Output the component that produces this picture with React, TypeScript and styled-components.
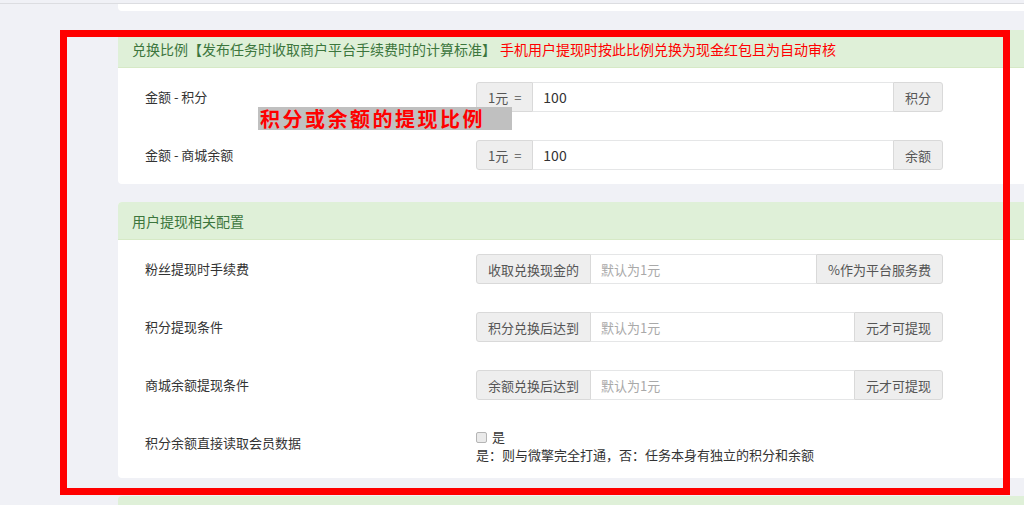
import React from 'react';
import styled, { createGlobalStyle } from 'styled-components';

const GlobalStyle = createGlobalStyle`
  html, body {
    margin: 0;
    padding: 0;
    background: #f0f1f6;
    overflow: hidden;
  }
  body {
    font-family: "Noto Sans CJK SC", "Liberation Sans", sans-serif;
    color: #333;
  }
`;

const Page = styled.div`
  position: relative;
  height: 505px;
  overflow: hidden;
`;

const TopLine = styled.div`
  height: 3px;
  border-bottom: 1px solid #dcdde1;
`;

const Column = styled.div`
  padding-left: 118px;
`;

const PrevPanelEnd = styled.div`
  width: 940px;
  height: 7px;
  background: #fff;
  border-radius: 0 0 4px 4px;
  margin-bottom: 19px;
`;

const Panel = styled.section`
  width: 940px;
  background: #fff;
  border-radius: 4px;
  overflow: hidden;
  margin-bottom: 18px;
`;

const PanelHeading = styled.header`
  height: 37px;
  display: flex;
  align-items: center;
  padding: 0 14px;
  background: #dff0d8;
  border-bottom: 1px solid #d6e9c6;
  color: #3c763d;
  font-size: 14px;
  white-space: nowrap;
`;

const Warn = styled.span`
  color: #f00;
  margin-left: 4px;
`;

const PanelBody = styled.div`
  padding: 14px 0 14px 27px;
`;

const FormRow = styled.div`
  display: flex;
  align-items: flex-start;
  & + & {
    margin-top: 28px;
  }
`;

const RowLabel = styled.label`
  width: 331px;
  padding-top: 7px;
  line-height: 16px;
  font-size: 13px;
  color: #333;
`;

const InputGroup = styled.div`
  display: flex;
  width: 467px;
  height: 30px;
`;

const Addon = styled.span<{ $side: 'left' | 'right' }>`
  display: flex;
  align-items: center;
  padding: 0 11px;
  background: #eee;
  border: 1px solid #d9d9d9;
  color: #555;
  font-size: 13px;
  word-spacing: 3px;
  white-space: nowrap;
  border-radius: ${p => (p.$side === 'left' ? '3px 0 0 3px' : '0 3px 3px 0')};
`;

const Field = styled.input`
  flex: 1;
  min-width: 0;
  height: 30px;
  box-sizing: border-box;
  border: 1px solid #e5e6e7;
  border-left: none;
  border-right: none;
  padding: 0 10px;
  font-family: "Noto Sans CJK SC", "Liberation Sans", sans-serif;
  font-size: 14px;
  color: #333;
  outline: none;
  &::placeholder {
    color: #a9a9a9;
    font-size: 13px;
  }
`;

const Stack = styled.div`
  display: flex;
  flex-direction: column;
  font-size: 13px;
  line-height: 18px;
  color: #333;
`;

const CheckLine = styled.label`
  display: flex;
  align-items: center;
  gap: 5px;
  height: 18px;
`;

const Box = styled.span`
  width: 9px;
  height: 9px;
  border: 1px solid #b5b5b5;
  border-radius: 2px;
  background: #eaeaea;
`;

const NextHeading = styled.div`
  width: 940px;
  height: 20px;
  background: #dff0d8;
  border-radius: 4px 4px 0 0;
`;

const Marker = styled.div`
  position: absolute;
  left: 60px;
  top: 30px;
  width: 950px;
  height: 465px;
  box-sizing: border-box;
  border: 7px solid #ff0000;
  pointer-events: none;
`;

const Callout = styled.div`
  position: absolute;
  left: 258px;
  top: 107px;
  width: 254px;
  height: 23px;
  background: #c0c0c0;
  color: #ff0000;
  font-family: "Noto Sans CJK SC", "Liberation Serif", serif;
  font-weight: 700;
  font-size: 20px;
  line-height: 23px;
  letter-spacing: 2.5px;
  padding-left: 2px;
  box-sizing: border-box;
  white-space: nowrap;
`;

type Row = { label: string; pre: string; post: string; value?: string; placeholder?: string };

const ratioRows: Row[] = [
  { label: '金额 - 积分', pre: '1元 =', post: '积分', value: '100' },
  { label: '金额 - 商城余额', pre: '1元 =', post: '余额', value: '100' },
];

const withdrawRows: Row[] = [
  { label: '粉丝提现时手续费', pre: '收取兑换现金的', post: '%作为平台服务费', placeholder: '默认为1元' },
  { label: '积分提现条件', pre: '积分兑换后达到', post: '元才可提现', placeholder: '默认为1元' },
  { label: '商城余额提现条件', pre: '余额兑换后达到', post: '元才可提现', placeholder: '默认为1元' },
];

function GroupRow({ row }: { row: Row }) {
  return (
    <FormRow>
      <RowLabel>{row.label}</RowLabel>
      <InputGroup>
        <Addon $side="left">{row.pre}</Addon>
        <Field defaultValue={row.value} placeholder={row.placeholder} />
        <Addon $side="right">{row.post}</Addon>
      </InputGroup>
    </FormRow>
  );
}

export default function App() {
  return (
    <Page>
      <GlobalStyle />
      <TopLine />
      <Column>
        <PrevPanelEnd />
        <Panel>
          <PanelHeading>
            兑换比例【发布任务时收取商户平台手续费时的计算标准】
            <Warn>手机用户提现时按此比例兑换为现金红包且为自动审核</Warn>
          </PanelHeading>
          <PanelBody>
            {ratioRows.map(r => (
              <GroupRow key={r.label} row={r} />
            ))}
          </PanelBody>
        </Panel>
        <Panel>
          <PanelHeading>用户提现相关配置</PanelHeading>
          <PanelBody>
            {withdrawRows.map(r => (
              <GroupRow key={r.label} row={r} />
            ))}
            <FormRow>
              <RowLabel>积分余额直接读取会员数据</RowLabel>
              <Stack>
                <CheckLine>
                  <Box />
                  是
                </CheckLine>
                <span>是：则与微擎完全打通，否：任务本身有独立的积分和余额</span>
              </Stack>
            </FormRow>
          </PanelBody>
        </Panel>
        <NextHeading />
      </Column>
      <Marker />
      <Callout>积分或余额的提现比例</Callout>
    </Page>
  );
}
